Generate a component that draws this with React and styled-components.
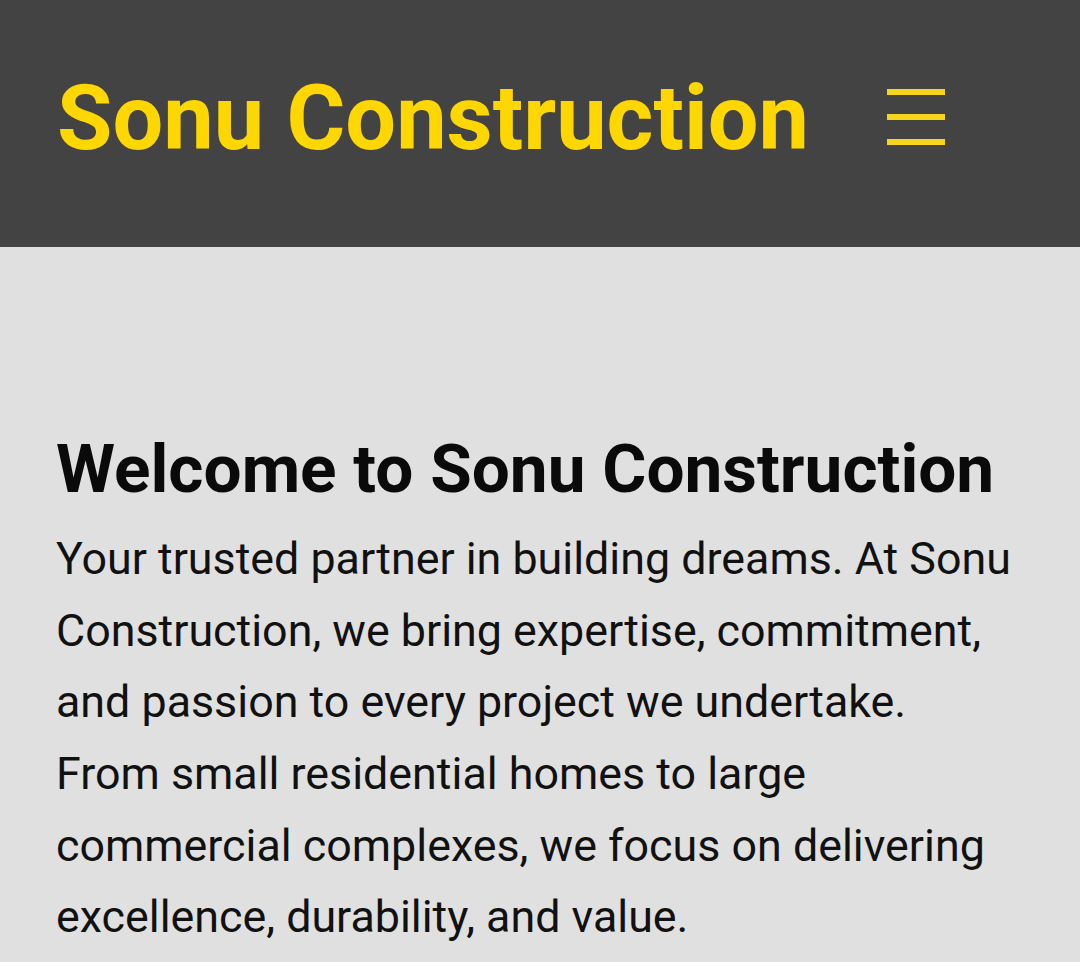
import React from "react";
import styled, { createGlobalStyle } from "styled-components";

const Global = createGlobalStyle`
  html, body { margin: 0; padding: 0; background: #e0e0e0; }
  body { font-family: Roboto, "Liberation Sans", Arial, sans-serif; }
  * { box-sizing: border-box; }
`;

const Header = styled.header`
  background: #434343;
  height: 247px;
  display: flex;
  align-items: flex-start;
  padding: 65px 0 0 57px;
  gap: 78px;
`;

const Title = styled.h1`
  margin: 0;
  color: #ffd700;
  font-size: 90px;
  font-weight: 700;
  line-height: 1.2;
  white-space: nowrap;
`;

const MenuButton = styled.button`
  background: none;
  border: 0;
  padding: 0;
  margin-top: 24px;
  width: 58px;
  display: flex;
  flex-direction: column;
  gap: 19px;
  cursor: pointer;
`;

const Bar = styled.span`
  display: block;
  height: 6px;
  width: 100%;
  background: #f7d51d;
`;

const Main = styled.main`
  padding: 181px 40px 0 56px;
`;

const Heading = styled.h2`
  margin: 0 0 14px;
  font-size: 67.5px;
  font-weight: 700;
  line-height: 1.2;
  color: #0a0a0a;
  white-space: nowrap;
`;

const Text = styled.p`
  margin: 0;
  font-size: 44.8px;
  line-height: 1.6;
  color: #111;
  max-width: 960px;
`;

export default function App() {
  return (
    <>
      <Global />
      <Header>
        <Title>Sonu Construction</Title>
        <MenuButton aria-label="Menu">
          <Bar />
          <Bar />
          <Bar />
        </MenuButton>
      </Header>
      <Main>
        <Heading>Welcome to Sonu Construction</Heading>
        <Text>
          Your trusted partner in building dreams. At Sonu Construction, we
          bring expertise, commitment, and passion to every project we
          undertake. From small residential homes to large commercial
          complexes, we focus on delivering excellence, durability, and value.
        </Text>
      </Main>
    </>
  );
}
